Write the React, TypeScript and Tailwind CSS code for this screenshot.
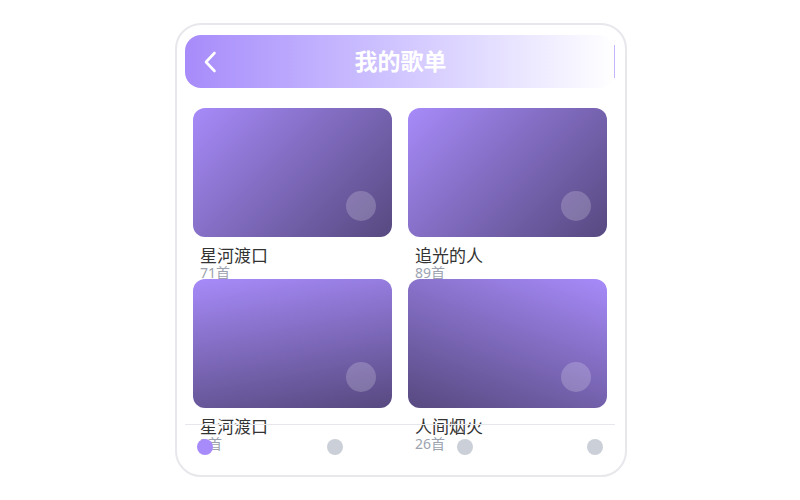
import React from 'react';

interface Playlist {
  title: string;
  count: string;
  angle: string;
}

const playlists: Playlist[] = [
  { title: '星河渡口', count: '71首', angle: 'bg-linear-135' },
  { title: '追光的人', count: '89首', angle: 'bg-linear-135' },
  { title: '星河渡口', count: '3首', angle: 'bg-linear-170' },
  { title: '人间烟火', count: '26首', angle: 'bg-linear-200' },
];

function BackIcon() {
  return (
    <svg width="14" height="22" viewBox="0 0 14 22" fill="none">
      <polyline
        points="11.5,2 3,11 11.5,20"
        stroke="white"
        strokeWidth="2.6"
        strokeLinecap="round"
        strokeLinejoin="round"
      />
    </svg>
  );
}

export default function App() {
  return (
    <div
      className="w-[800px] h-[500px] bg-white flex items-center justify-center"
      style={{ fontFamily: '"Noto Sans", "Noto Sans CJK SC", sans-serif' }}
    >
      <div className="relative w-[452px] h-[454px] border-2 border-[#e7e7ec] rounded-[26px] bg-white overflow-hidden pt-[10px] pl-2 pr-[10px] ml-[2px]">
        {/* Header */}
        <div className="h-[53px] rounded-2xl bg-linear-to-r from-[#a78bfa] to-white flex items-center pl-[18px]">
          <BackIcon />
          <div className="flex-1 text-center text-white font-bold text-[23px] leading-none pr-[30px]">
            我的歌单
          </div>
          <div className="w-px h-[33px] bg-[#c4b5fd]" />
        </div>

        {/* Grid */}
        <div className="grid grid-cols-2 gap-x-4 px-2 mt-5">
          {playlists.map((p, i) => (
            <div key={i} className="h-[171px]">
              <div
                className={`relative h-[129px] rounded-xl ${p.angle} from-[#a78bfa] to-[#574980]`}
              >
                <div className="absolute right-4 bottom-4 w-[30px] h-[30px] rounded-full bg-white/20" />
              </div>
              <div className="pl-[7px] mt-[10px] text-[17px] leading-[18px] text-[#333333]">
                {p.title}
              </div>
              <div className="pl-[7px] text-[14px] leading-[15px] text-[#9ca3af]">
                {p.count}
              </div>
            </div>
          ))}
        </div>

        {/* Bottom nav */}
        <div className="absolute left-2 right-[10px] bottom-[7px] h-[44px] border-t border-[#e5e7eb] flex items-center justify-between px-3">
          <span className="w-4 h-4 rounded-full bg-[#a78bfa]" />
          <span className="w-4 h-4 rounded-full bg-[#cbd0d8]" />
          <span className="w-4 h-4 rounded-full bg-[#cbd0d8]" />
          <span className="w-4 h-4 rounded-full bg-[#cbd0d8]" />
        </div>
      </div>
    </div>
  );
}
